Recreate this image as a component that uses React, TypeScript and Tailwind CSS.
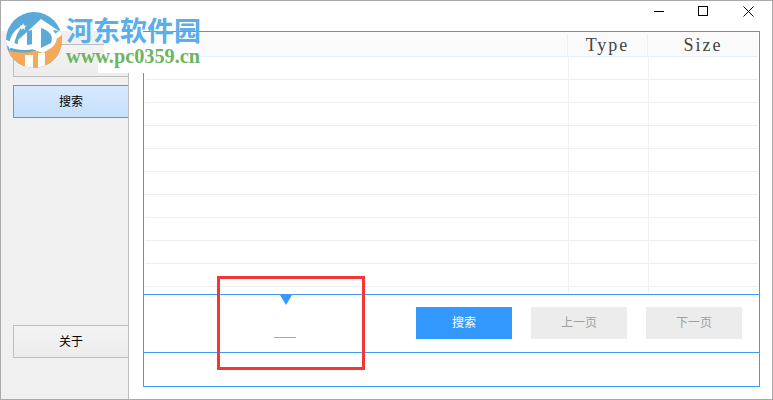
const rows = Array.from({ length: 11 });

function SideButton({ label, active }: { label?: string; active?: boolean }) {
  return (
    <div
      className={
        active
          ? "ml-3 h-[33px] border border-r-0 border-[#5b9bdc] bg-gradient-to-b from-[#d7e9fd] to-[#c6e0fb] flex items-center justify-center text-xs text-black"
          : "ml-3 h-[33px] border border-r-0 border-[#bdbdbd] bg-gradient-to-b from-[#f3f3f3] to-[#ececec] flex items-center justify-center text-xs text-black"
      }
    >
      {label}
    </div>
  );
}

function Logo() {
  return (
    <svg width="58" height="58" viewBox="0 0 58 58">
      <defs>
        <clipPath id="disc">
          <circle cx="29" cy="29" r="28" />
        </clipPath>
      </defs>
      <g clipPath="url(#disc)">
        <rect width="58" height="58" fill="#5aa9d8" />
        {/* orange base */}
        <path d="M0 38 Q28 50 58 22 V58 H0 Z" fill="#f5a95a" />
        <path d="M0 31 Q26 46 58 20" stroke="#fff" strokeWidth="5" fill="none" />
        <rect x="20" y="44" width="8" height="14" fill="#fff" />
        <rect x="33" y="42" width="7" height="16" fill="#fff" />
        {/* swoosh */}
        <path d="M4 38 Q3 22 18 14 Q10 24 9 35 Z" fill="#fff" />
        {/* small column */}
        <path d="M13 29 L22 21 V37 H13 Z" fill="#fff" />
        {/* house with D */}
        <path d="M27 38 V19 L23 20 L36 8 L54 20 L48 19 Q56 30 46 37 L38 42 Z" fill="#fff" />
        <path d="M36 17 Q50 22 46 32 L36 37 Z" fill="#5aa9d8" />
      </g>
      <path d="M18 12 l1 2.400 2.500.3-1.900 1.700.6 2.500-2.200-1.300-2.200 1.300.6-2.500-1.900-1.700 2.500-.3z" fill="#fff" />
    </svg>
  );
}

export default function App() {
  return (
    <div
      className="relative w-[773px] h-[400px] overflow-hidden bg-white border border-[#aaaaaa] flex flex-col"
      style={{ fontFamily: '"Liberation Sans", "Noto Sans CJK SC", sans-serif' }}
    >
      {/* title bar */}
      <div className="h-[30px] flex justify-end items-start shrink-0 pr-[1px]">
        <div className="w-[44px] h-[20px] flex items-center justify-center">
          <div className="w-[10px] h-px bg-black" />
        </div>
        <div className="w-[44px] h-[20px] flex items-center justify-center">
          <div className="w-[10px] h-[10px] border border-black" />
        </div>
        <div className="w-[46px] h-[20px] flex items-center justify-center">
          <svg width="11" height="11" viewBox="0 0 11 11">
            <path d="M0.500 0.500 L10.500 10.500 M10.500 0.500 L0.500 10.500" stroke="#000" strokeWidth="1" fill="none" />
          </svg>
        </div>
      </div>

      <div className="flex flex-1 min-h-0">
        {/* sidebar */}
        <div className="w-[128px] shrink-0 bg-[#f0f0f0] border-r border-[#bdbdbd] flex flex-col pt-[13px] pb-[41px]">
          <SideButton />
          <div className="mt-2">
            <SideButton label="搜索" active />
          </div>
          <div className="mt-auto">
            <SideButton label="关于" />
          </div>
        </div>

        {/* main panel */}
        <div className="flex-1 pl-[14px] pr-[12px] pb-[12px]">
          <div className="h-full border border-[#3d9bf5] flex flex-col">
            <div
              className="h-[25px] shrink-0 mr-[1px] pt-[2px] bg-[#fafafa] border-b border-[#e6f0fb] flex text-[18px] text-[#444]"
              style={{ fontFamily: '"Liberation Serif", serif' }}
            >
              <div className="flex-1 border-r border-[#e6f0fb]" />
              <div className="w-[80px] border-r border-[#e6f0fb] flex items-center justify-center tracking-[2px]">Type</div>
              <div className="w-[110px] flex items-center justify-center tracking-[2px]">Size</div>
            </div>
            <div className="h-[236px] mb-px shrink-0 mx-[1px] overflow-hidden">
              {rows.map((_, i) => (
                <div key={i} className="h-[23px] border-b border-[#eeeeee] flex">
                  <div className="flex-1 border-r border-[#f0f0f0]" />
                  <div className="w-[80px] border-r border-[#f0f0f0]" />
                  <div className="w-[109px]" />
                </div>
              ))}
            </div>

            <div className="h-[59px] shrink-0 border-y border-[#3d9bf5] relative flex items-center justify-end gap-[19px] pr-[17px] pb-[2px]">
              <div className="w-[96px] h-[32px] bg-[#3399ff] text-white text-xs flex items-center justify-center">搜索</div>
              <div className="w-[96px] h-[32px] bg-[#ececec] text-[#a0a0a0] text-xs flex items-center justify-center">上一页</div>
              <div className="w-[96px] h-[32px] bg-[#ececec] text-[#a0a0a0] text-xs flex items-center justify-center">下一页</div>
              <div className="absolute left-[136px] top-0 w-0 h-0 border-x-[6px] border-x-transparent border-t-[10px] border-t-[#3399ff]" />
              <div className="absolute left-[130px] top-[42px] w-[22px] h-px bg-[#aaaaaa]" />
            </div>
          </div>
        </div>
      </div>

      {/* red annotation */}
      <div className="absolute left-[216px] top-[275px] w-[148px] h-[94px] border-[3px] border-[#f33636]" />

      {/* watermark */}
      <div className="absolute left-[103px] top-[31px] w-[96px] h-[25px] bg-white/90" />
      <div className="absolute left-[97px] top-[56px] w-[102px] h-[16px] bg-white" />
      <div className="absolute left-[4px] top-[10px]">
        <Logo />
      </div>
      <div className="absolute left-[65px] top-[13px]">
        <div className="text-[27px] leading-[31px] font-bold text-[#5aaeea]" style={{ fontFamily: '"Noto Sans CJK SC", sans-serif' }}>河东软件园</div>
        <div className="text-[20.300px] leading-[22px] font-bold text-[#6cb562]" style={{ fontFamily: '"Liberation Serif", serif' }}>www.pc0359.cn</div>
      </div>
    </div>
  );
}
